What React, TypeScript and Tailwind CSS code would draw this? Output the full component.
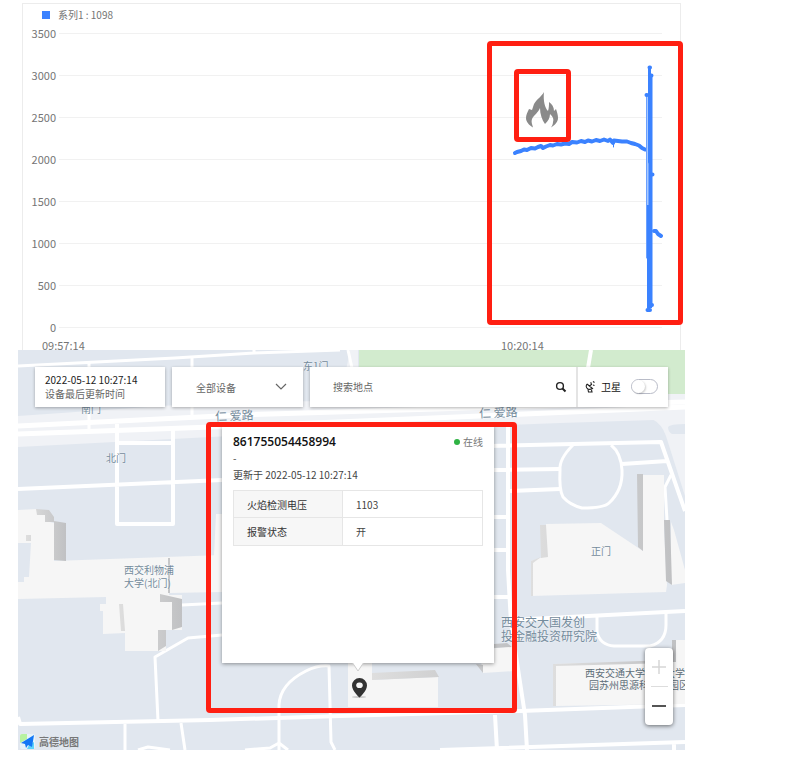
import React from "react";

const TICKS = [3500, 3000, 2500, 2000, 1500, 1000, 500, 0];

const ROAD = "#ffffff";

type Label = { text: string[]; style: string };

const LABELS: Label[] = [
  { text: ["南门"], style: "left-[63px] top-[52px] text-[10px] leading-[13px]" },
  { text: ["东1门"], style: "left-[285px] top-[9px] text-[10px] leading-[13px]" },
  { text: ["北门"], style: "left-[88px] top-[101px] text-[10px] leading-[13px]" },
  { text: ["正门"], style: "left-[573px] top-[194px] text-[10px] leading-[13px]" },
  { text: ["仁 爱路"], style: "left-[197px] top-[57px] text-[12px] leading-[16px] -rotate-2" },
  { text: ["仁 爱路"], style: "left-[461px] top-[54px] text-[12px] leading-[16px] -rotate-2" },
  { text: ["西交利物浦", "大学(北门)"], style: "left-[106px] top-[213px] text-[10px] leading-[13px]" },
  { text: ["西安交大国发创", "投金融投资研究院"], style: "left-[483px] top-[265px] text-left text-[12px] leading-[14px]" },
];

function Chart() {
  return (
    <section className="relative mx-1 h-[347px] overflow-hidden border-x border-t border-[#ececec] bg-white text-[11px] text-[#757575]">
      <div className="flex h-[21px] items-center gap-2 pl-[19px] text-[10px]">
        <span className="size-2 bg-[#3b82ff]" />
        <span>系列1 : 1098</span>
      </div>
      <div className="flex flex-col gap-[26px] pr-[18px]">
        {TICKS.map((t) => (
          <div key={t} className="flex h-4 items-center gap-[3px]">
            <span className="w-[33px] text-right leading-4">{t}</span>
            <span className="h-px flex-1 bg-[#f1f1f1]" />
          </div>
        ))}
      </div>
      <div className="mt-[2px] flex pl-[19px] leading-4">
        <span className="w-[459px]">09:57:14</span>
        <span>10:20:14</span>
      </div>
      <svg className="absolute right-0 top-0" width="190" height="330" viewBox="490 4 190 330" fill="none" stroke="#3b82ff" strokeLinecap="round" strokeLinejoin="round">
        <path strokeWidth="4" d="M515 153 L517 152 L521 151 L524 149.500 L527 150 L531 148 L535 148.500 L538 147 L541 146 L543 148 L546 146.500 L550 145 L553 145.500 L557 144 L561 144.500 L565 143.500 L569 144 L572 142 L577 142.500 L581 141 L585 142 L588 140.500 L592 141.500 L596 140 L600 141 L604 139.500 L608 141 L610 139.500 L613 143 L614 140.500 L618 141 L622 141.500 L627 141.500 L631 143 L635 144 L639 145.500 L642 148 L645 149.500" />
        <path strokeWidth="1" d="M613.500 142 V147" />
        <path strokeWidth="2" stroke="#a9c9ff" d="M648 96 V215" />
        <path strokeWidth="1" stroke="#6aa0ff" d="M646.500 95 V258" />
        <path strokeWidth="5" strokeLinecap="butt" d="M649.500 205 V308" />
        <path strokeWidth="3" d="M649.500 68 V162 M651 76 V306" />
        <path strokeWidth="3" d="M650 140 V306" />
        <path strokeWidth="4" d="M646.500 95 H647 M649.500 67.500 H650 M651 75.500 H651.500 M652 174.500 H652.500 M647.500 310 H650 M651 305 H652 M654 231 L656 231 L658 234 L661 236" />
      </svg>
    </section>
  );
}

function MapCanvas() {
  return (
    <svg className="absolute left-0 top-0 h-full w-full" viewBox="18 350 667 400" preserveAspectRatio="xMinYMin slice" aria-hidden="true">
      <defs>
        <linearGradient id="side" x1="0" x2="1">
          <stop offset="0" stopColor="#dedede" />
          <stop offset="1" stopColor="#c0c1c3" />
        </linearGradient>
      </defs>
      <path fill="#e1e7ef" d="M18 350H685V750H18Z" />
      <path fill="#f0f2f6" d="M18 416 L220 402 L340 401 L350 350 H358 V402 L685 390 V419 L560 423 L230 436 L18 447Z" />
      <path fill="#d2ebce" d="M359 350H685V394H359Z" />
      <path fill="#f0f2f6" d="M652 419 Q662 424 666 436 L685 496 V434 H672 Q668 432 668 427 Q670 424 685 424 V417Z" />

      <g stroke={ROAD} strokeWidth="3" fill="none" strokeLinejoin="round">
        <path d="M18 366 L175 358 L254 353 L340 350 M254 350 V354" />
        <path strokeWidth="4" d="M591 350 L588 368" />
        <path d="M89 363V430 M192 358V419 M348 350 L352 368" />
        <path strokeWidth="5" d="M18 426 L240 415 L500 407 L685 402" />
        <path strokeWidth="5" d="M18 434 L240 426 L480 416 L685 407" />
        <path strokeWidth="4" d="M117 424 V524 H173 V427 M117 443H173 M18 489 L222 480" />
        <path d="M182 605 L222 603 M222 635 L188 638 L155 657 L158 721" />
        <path strokeWidth="4" d="M18 717 L20 724 L210 720 L340 716 L520 711 L685 705" />
        <path strokeWidth="3" d="M125 724V750 M181 723 L185 750 M138 750 L148 747 L170 750 M279 750V705 Q280 684 306 671 Q318 665 329 666 L331 742 L335 750 M245 750 L270 748 L279 743 L288 750" />
        <path strokeWidth="4" d="M490 446 L661 442 L685 511 M490 470 L560 469 M510 491 L560 489 M622 464 L667 461 M508 423 L508 570 L511 623 L525 715 L527 750 M494 517H508 M494 550H508 M494 597H508 M511 620 L685 611 M495 715 L497 750 M440 750 L685 742 M674 744V750" />
        <path d="M573 445 Q559 459 560 470 Q559 490 563 497 Q570 505 582 508 Q604 508 609 503 Q623 490 622 470 Q621 453 611 445" />
        <path d="M597 616 V632 Q600 645 614 646 H650 Q666 642 666 625 V613 M671 475 L665 487 L667 520" />
      </g>

      <g fill="#f6f6f6">
        <path d="M18 510 L37 509 V513 L45 515 V521 L54 523 V561 L222 555 V592 L169 593 V595 H182 V630 H166 V651 H125 V633 L103 634 V611 H100 V604 H106 V597 L18 599 V582 H24 V577 H29 L31 543 H18Z" />
        <path d="M216 514 H222 V556 H214Z" />
        <path d="M546 524 L601 523 L643 551 V475 L664 475 V530 L667 585 L666 592 L531 596 V561 L546 556Z" />
        <path d="M671 522 L674 530 L685 570 V583 L671 585Z" />
        <path d="M348 663 H372 V680 L438 677 V707 H348Z" />
        <path d="M479 650 L514 646 V671 L483 673Z" />
        <path d="M553 664 L644 662 L685 650 V704 L555 706Z" />
        <path d="M674 640H685V662H674Z" />
      </g>
      <g fill="url(#side)">
        <path d="M36 509 L49 510 L54 517 V522 H45 V515 H37Z M54 521 L66 523 V561 L54 560Z M26 535 H31 V541 H26Z" />
        <path d="M160 594 L182 599 V627 L172 630 V602 L160 602Z M158 630 H166 V646 L158 651Z M119 604 H123 L125 631 H121Z M168 558H170V593H168Z" />
        <path d="M540 525 H546 L548 557 L541 558Z M531 561 L541 557 L533 563V596H531Z M637 474H643V551L638 547Z M664 520 H670 L672 585 L666 581Z" />
        <path d="M372 673 L435 670 L439 677 L372 680Z M494 644L507 643 L512 647L494 648Z M476 664L483 665V673Z" />
        <path d="M553 664L670 660V663L556 666V706H553Z M672 640H676V662H672Z" />
      </g>
    </svg>
  );
}

function TopBar() {
  const box = "bg-white shadow-[0_1px_3px_rgba(0,0,0,0.3)]";
  return (
    <div className="absolute inset-x-[17px] top-[17px] flex h-10 gap-[7px] text-[10px] text-[#666]">
      <div className={`${box} w-[130px] pl-[10px] pt-[6px] leading-[14px]`}>
        <p className="text-[#222]">2022-05-12 10:27:14</p>
        <p>设备最后更新时间</p>
      </div>
      <div className={`${box} relative w-[131px]`}>
        <select aria-label="设备" className="h-full w-full appearance-none bg-transparent pl-6 text-[10px] outline-none">
          <option>全部设备</option>
        </select>
        <svg className="pointer-events-none absolute right-4 top-[15px]" width="12" height="10" viewBox="0 0 12 10" fill="none" stroke="#666" strokeWidth="1.200">
          <path d="M1 2 L6 7 L11 2" />
        </svg>
      </div>
      <div className={`${box} flex flex-1`}>
        <input aria-label="搜索地点" placeholder="搜索地点" className="min-w-0 flex-1 bg-transparent pb-[2px] pl-[23px] text-[10px] outline-none placeholder:text-[#666]" />
        <button aria-label="搜索" className="grid w-[33px] place-items-center border-r-2 border-[#e4e4e4]">
          <svg width="12" height="12" viewBox="0 0 12 12" fill="none" stroke="#222" strokeWidth="1.400">
            <circle cx="5" cy="5" r="3.400" />
            <path d="M7.500 7.500 L10.500 10.500" strokeWidth="2" />
          </svg>
        </button>
        <label className="flex w-[90px] items-center gap-[6px] pb-px pl-[7px] text-[#111]">
          <svg width="10" height="12" viewBox="0 0 10 12" fill="none" stroke="#222" strokeWidth="1.100">
            <path d="M2 3 Q0 6 3 8 Q5 9 7.500 7.500 L2 3 M4.500 5 L7 3 M5.500 1.500 L6.500 2.500 M8 0.500 L9.500 1.500 M8 4 L9.500 4.500 M3 8.500 L3.500 11 H7 L6.500 9" />
          </svg>
          <span>卫星</span>
          <input type="checkbox" role="switch" className="ml-[4px] h-[15px] w-[27px] appearance-none rounded-full border border-[#b9bcc8] bg-white before:block before:size-[13px] before:rounded-full before:bg-white before:shadow-[1px_1px_2px_rgba(0,0,0,0.2)]" />
        </label>
      </div>
    </div>
  );
}

function Popup() {
  const cell = "border border-[#e6e6e6] pl-[13px] text-left font-normal";
  return (
    <article className="absolute left-[204px] top-[76px] h-[237px] w-[272px] bg-white px-[11px] pt-2 text-[10px] text-[#444] shadow-[0_1px_4px_rgba(0,0,0,0.4)]">
      <header className="flex items-center justify-between leading-4">
        <h2 className="font-['Open_Sans',sans-serif] text-xs font-semibold leading-4 text-[#111]">861755054458994</h2>
        <span className="flex items-center gap-[3px] text-[#777]">
          <i className="size-[6px] rounded-full bg-[#2fb344]" />
          在线
        </span>
      </header>
      <p className="leading-4">-</p>
      <p className="leading-[17px]">更新于 2022-05-12 10:27:14</p>
      <table className="mt-[7px] w-full table-fixed border-collapse">
        <tbody>
          <tr className="h-[27px]">
            <th className={`${cell} w-[109px] bg-[#f7f7f7] text-[#333]`}>火焰检测电压</th>
            <td className={cell}>1103</td>
          </tr>
          <tr className="h-7">
            <th className={`${cell} bg-[#f7f7f7] text-[#333]`}>报警状态</th>
            <td className={cell}>开</td>
          </tr>
        </tbody>
      </table>
      <svg className="absolute left-[130px] top-[236px]" width="12" height="10" viewBox="0 0 12 10">
        <path d="M0 0 L6 9 L12 0" fill="#fff" stroke="#ccc" />
        <path d="M0 0H12" stroke="#fff" strokeWidth="2" />
      </svg>
    </article>
  );
}

function DeviceMap() {
  return (
    <section className="relative h-[400px] overflow-hidden">
      <MapCanvas />
      {LABELS.map((l, i) => (
        <div key={i} className={`absolute whitespace-nowrap text-[#748b9c] [text-shadow:0_0_2px_#fff] ${l.style}`}>
          {l.text.map((s) => (
            <p key={s}>{s}</p>
          ))}
        </div>
      ))}
      <div className="absolute left-[567px] top-[317px] whitespace-nowrap text-[10px] leading-[12px] text-[#5d6d78]">
        <p>西安交通大学国家大学科</p>
        <p className="pl-1">园苏州思源科技园园区</p>
      </div>
      <TopBar />
      <Popup />
      <svg className="absolute left-[333px] top-[327px]" width="17" height="22" viewBox="0 0 17 22">
        <ellipse cx="8" cy="20" rx="7" ry="1" fill="#ccc" />
        <path fill="#333" fillRule="evenodd" d="M8.500 1 A7.500 7.500 0 0 0 1 8.500 C1 14 8.500 20.500 8.500 20.500 S16 14 16 8.500 A7.500 7.500 0 0 0 8.500 1Z M8.500 5.500 A2.800 2.800 0 1 1 8.500 11 A2.800 2.800 0 1 1 8.500 5.500Z" />
      </svg>
      <div className="absolute right-3 top-[298px] flex h-[77px] w-7 flex-col items-center rounded-sm bg-white shadow-[0_1px_4px_rgba(0,0,0,0.55)]">
        <button aria-label="放大" className="grid w-full flex-1 place-items-center">
          <svg width="14" height="14" viewBox="0 0 14 14" stroke="#d6d6d6" strokeWidth="1.500"><path d="M0 7H14M7 0V14" /></svg>
        </button>
        <span className="h-px w-[17px] bg-[#ddd]" />
        <button aria-label="缩小" className="grid w-full flex-1 place-items-center">
          <svg width="14" height="14" viewBox="0 0 14 14" stroke="#555" strokeWidth="2"><path d="M0 7H14" /></svg>
        </button>
      </div>
      <a href="#" className="absolute bottom-0 left-[2px] flex items-center gap-1 text-[10px] font-bold leading-[17px] text-[#777]">
        <svg width="15" height="16" viewBox="0 0 15 16">
          <rect width="15" height="15" rx="2" fill="#e6f3fa" />
          <path fill="#b8f2a0" d="M0 2 Q0 0 2 0H7V5L0 9Z" />
          <path fill="#5fd4fb" d="M9 11L14 8V15H7Z" />
          <path fill="#1377f5" d="M14 1L1 9L5 10L6 14L8 11L12 13Z" />
        </svg>
        高德地图
      </a>
    </section>
  );
}

export default function App() {
  const frame = "pointer-events-none absolute rounded-[4px] border-[5px] border-[#ff1f12]";
  return (
    <main className="bg-white pb-4 pl-[18px] pr-[124px] font-['Noto_Sans_CJK_SC',sans-serif]">
      <div className="relative pt-[3px]">
        <Chart />
        <DeviceMap />
        <div className={`${frame} right-[2px] top-[41px] h-[284px] w-[196px]`} />
        <div className={`${frame} right-[114px] top-[69px] grid h-[73px] w-[57px] place-items-center`}>
          <svg className="mt-2" width="33" height="36" viewBox="0 0 33 36" fill="#8a8a8a">
            <path d="M18 0 C16 4 11 7 8 12 L6 18 L3 17 C1 21 0 23 0 26 C0 30 3 33 7 35.500 C6 32 5 30 6 27 C8 23 12 21 14 16 C14 22 16 28 19 32 C22 29 24 26 24 22 C27 25 28 27 27 30 C27 32 26 34 25 35.500 C29 33 32 30 32 26 C32 23 31 20 30 17 L28 19 C28 15 26 12 23 10 C23 13 23 16 22 19 C19 16 17 9 18 0Z" />
          </svg>
        </div>
        <div className={`${frame} left-[188px] top-[422px] h-[291px] w-[311px]`} />
      </div>
    </main>
  );
}
